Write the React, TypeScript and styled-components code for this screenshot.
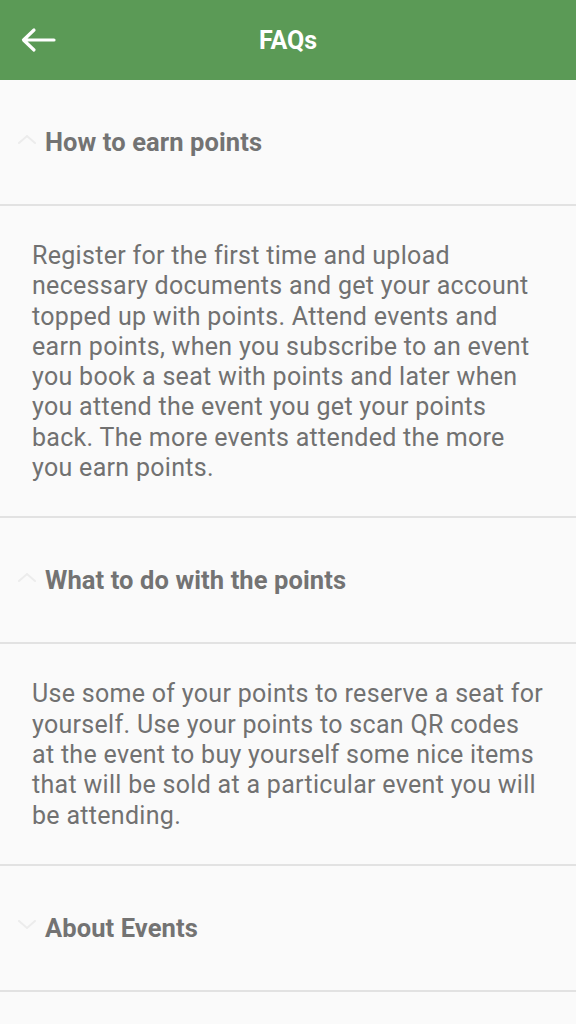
import styled, { createGlobalStyle } from 'styled-components';

const GlobalStyle = createGlobalStyle`
  html, body {
    margin: 0;
    padding: 0;
    background: #fafafa;
  }
  body {
    font-family: Roboto, "Noto Sans", sans-serif;
  }
`;

type Faq = {
  question: string;
  answer?: string[];
};

const FAQS: Faq[] = [
  {
    question: 'How to earn points',
    answer: [
      'Register for the first time and upload',
      'necessary documents and get your account',
      'topped up with points. Attend events and',
      'earn points, when you subscribe to an event',
      'you book a seat with points and later when',
      'you attend the event you get your points',
      'back. The more events attended the more',
      'you earn points.',
    ],
  },
  {
    question: 'What to do with the points',
    answer: [
      'Use some of your points to reserve a seat for',
      'yourself. Use your points to scan QR codes',
      'at the event to buy yourself some nice items',
      'that will be sold at a particular event you will',
      'be attending.',
    ],
  },
  { question: 'About Events' },
];

const BackArrow = () => (
  <svg width="36" height="26" viewBox="0 0 36 26" fill="none">
    <path
      d="M34 13H4M14 3L3.5 13L14 23"
      stroke="#fff"
      strokeWidth="3.2"
      strokeLinecap="round"
      strokeLinejoin="round"
    />
  </svg>
);

const Chevron = ({ open }: { open: boolean }) => (
  <ChevronSvg width="18" height="10" viewBox="0 0 18 10" fill="none" $open={open}>
    <path d="M1 9L9 2L17 9" stroke="#ececec" strokeWidth="2" strokeLinecap="round" />
  </ChevronSvg>
);

export default function App() {
  return (
    <>
      <GlobalStyle />
      <Page>
        <AppBar>
          <BackButton aria-label="Back">
            <BackArrow />
          </BackButton>
          <Title>FAQs</Title>
        </AppBar>

        {FAQS.map((faq) => (
          <section key={faq.question}>
            <Question>
              <Chevron open={!!faq.answer} />
              <span>{faq.question}</span>
            </Question>
            {faq.answer && (
              <Answer>
                {faq.answer.map((line) => (
                  <AnswerLine key={line}>{line}</AnswerLine>
                ))}
              </Answer>
            )}
          </section>
        ))}
      </Page>
    </>
  );
}

const Page = styled.div`
  width: 576px;
  min-height: 1024px;
  background: #fafafa;
`;

const AppBar = styled.header`
  position: relative;
  height: 80px;
  display: flex;
  align-items: center;
  justify-content: center;
  background: #5b9a56;
`;

const BackButton = styled.button`
  position: absolute;
  left: 20px;
  top: 27px;
  display: flex;
  padding: 0;
  border: none;
  background: none;
`;

const Title = styled.h1`
  margin: 0;
  font-size: 25px;
  font-weight: 700;
  color: #fff;
`;

const Question = styled.div`
  height: 124px;
  display: flex;
  align-items: center;
  gap: 9px;
  padding-left: 18px;
  border-bottom: 2px solid #e2e2e2;
  font-size: 25.5px;
  font-weight: 700;
  color: #737373;
  letter-spacing: 0.1px;
`;

const ChevronSvg = styled.svg<{ $open: boolean }>`
  flex: none;
  margin-top: -6px;
  transform: ${({ $open }) => ($open ? 'none' : 'rotate(180deg)')};
`;

const Answer = styled.p`
  margin: 0;
  padding: 35px 16px 33px 32px;
  border-bottom: 2px solid #e2e2e2;
  font-size: 25px;
  line-height: 30.3px;
  letter-spacing: 0.3px;
  color: #717171;
`;

const AnswerLine = styled.span`
  display: block;
  white-space: nowrap;
`;
